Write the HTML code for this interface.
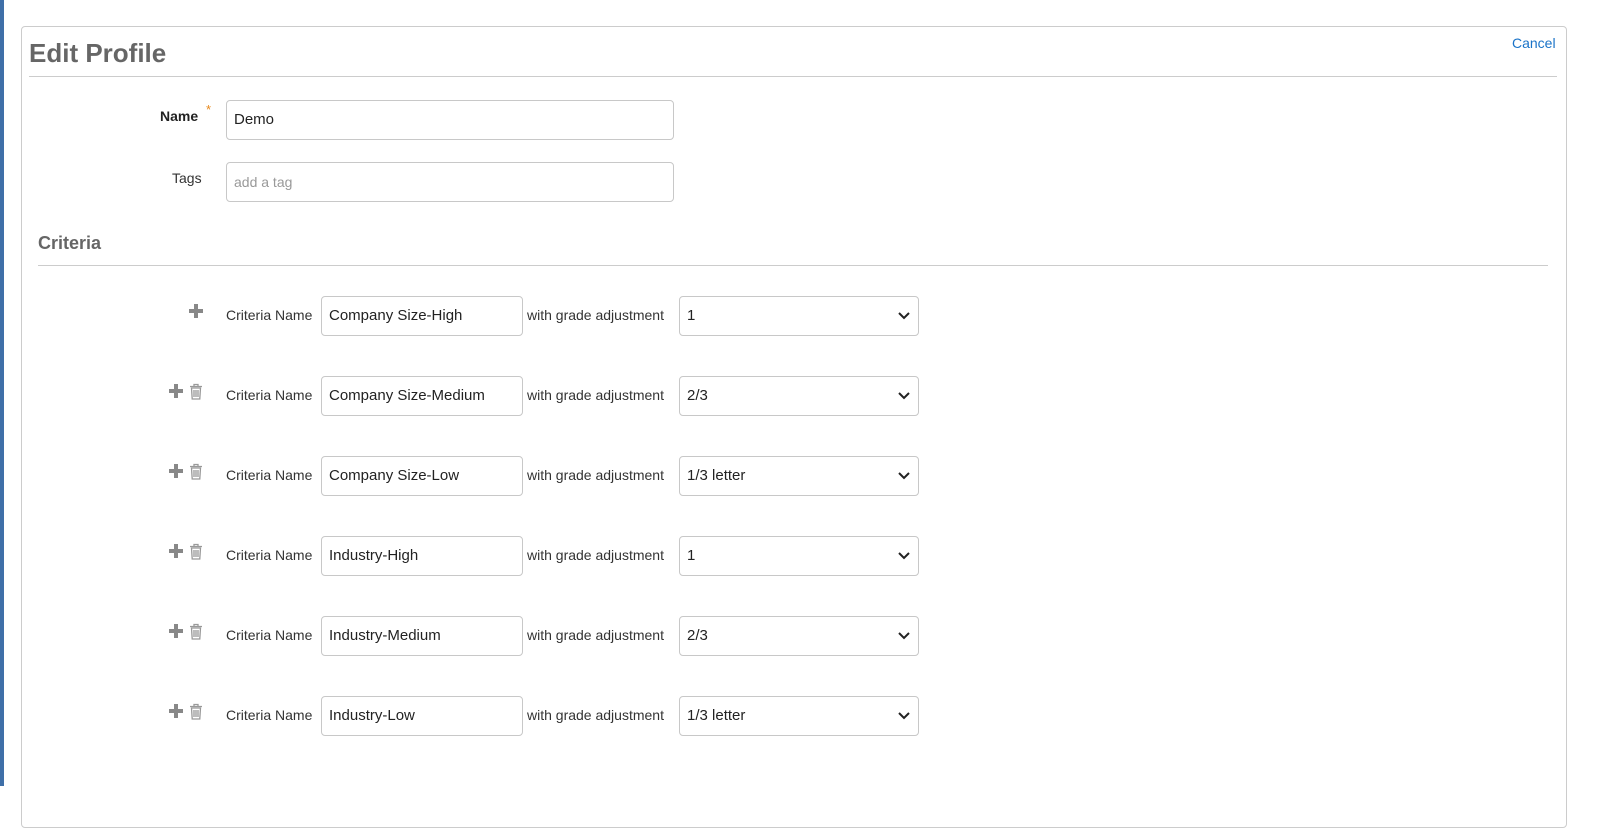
<!DOCTYPE html>
<html><head><style>
body{margin:0;width:1611px;height:786px;background:#fff;font-family:"Liberation Sans",sans-serif;position:relative;overflow:hidden}
.strip{position:absolute;left:0;top:0;width:4px;height:786px;background:#3f6fa8}
.card{position:absolute;left:21px;top:26px;width:1544px;height:800px;border:1px solid #ccc;border-radius:4px;background:#fff}
.a{position:absolute}
h1{position:absolute;left:29px;top:38px;margin:0;font-size:26px;color:#666;font-weight:bold}
.hr{position:absolute;height:1px;background:#ccc}
.inp{position:absolute;border:1px solid #c8c8c8;border-radius:4px;box-sizing:border-box;height:40px;font-size:15px;color:#222;padding-left:7px;line-height:38px;background:#fff}
.lbl{position:absolute;font-size:14px;color:#333}
.sel svg{position:absolute;right:8px;top:15px}
</style></head><body>
<div class="strip"></div>
<div class="card"></div>
<h1>Edit Profile</h1>
<div class="a" style="left:1512px;top:35px;font-size:14px;color:#1a73c8">Cancel</div>
<div class="hr" style="left:29px;top:76px;width:1528px"></div>
<div class="lbl" style="left:160px;top:108px;font-weight:bold;color:#222">Name</div>
<div class="a" style="left:206px;top:102px;color:#e8891c;font-size:13px">*</div>
<div class="inp" style="left:226px;top:100px;width:448px">Demo</div>
<div class="lbl" style="left:172px;top:170px">Tags</div>
<div class="inp" style="left:226px;top:162px;width:448px;color:#999;font-size:14px">add a tag</div>
<div class="a" style="left:38px;top:233px;font-size:18px;font-weight:bold;color:#666">Criteria</div>
<div class="hr" style="left:38px;top:265px;width:1510px"></div>
<div id="rows"></div>
<script>
var d=[["Company Size-High","1",0],["Company Size-Medium","2/3",1],["Company Size-Low","1/3 letter",1],["Industry-High","1",1],["Industry-Medium","2/3",1],["Industry-Low","1/3 letter",1]];
var h="";
d.forEach(function(r,i){var t=296+i*80;
var px=r[2]?168:188;
h+='<svg class="a" style="left:'+px+'px;top:'+(t+7)+'px" width="16" height="16" viewBox="0 0 16 16"><path d="M6 1h4v5h5v4h-5v5H6v-5H1V6h5z" fill="#888"/></svg>';
if(r[2])h+='<svg class="a" style="left:189px;top:'+(t+7)+'px" width="14" height="17" viewBox="0 0 14 17"><path d="M1 3.5h12M5 3.5V1.5h4v2M2.5 5h9l-.7 11H3.2zM5 7v7M7 7v7M9 7v7" stroke="#999" stroke-width="1.3" fill="none"/></svg>';
h+='<div class="lbl" style="left:226px;top:'+(t+11)+'px">Criteria Name</div>';
h+='<div class="inp" style="left:321px;top:'+t+'px;width:202px">'+r[0]+'</div>';
h+='<div class="lbl" style="left:527px;top:'+(t+11)+'px">with grade adjustment</div>';
h+='<div class="inp sel" style="left:679px;top:'+t+'px;width:240px">'+r[1]+'<svg width="12" height="8" viewBox="0 0 12 8"><path d="M1 1l5 5 5-5" stroke="#222" stroke-width="2" fill="none"/></svg></div>';
});
document.getElementById("rows").innerHTML=h;
</script>
</body></html>
